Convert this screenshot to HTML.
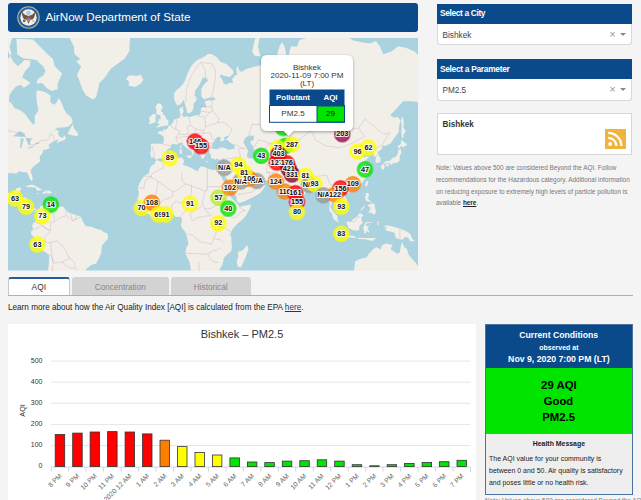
<!DOCTYPE html>
<html><head><meta charset="utf-8">
<style>
html,body{margin:0;padding:0;width:641px;height:500px;overflow:hidden;background:#f4f4f4;font-family:"Liberation Sans",sans-serif;position:relative}
.a{position:absolute}
.tx{position:absolute;white-space:nowrap}
.mt{font-family:"Liberation Sans",sans-serif;font-size:7.3px;font-weight:bold;text-anchor:middle;fill:#111;stroke:#fff;stroke-width:2.2px;paint-order:stroke;stroke-opacity:0.9;stroke-linejoin:round}
.yl{font-family:"Liberation Sans",sans-serif;font-size:7px;fill:#333;text-anchor:end}
.xl{font-family:"Liberation Sans",sans-serif;font-size:6.8px;fill:#666;text-anchor:end}
</style></head><body>
<div class="a" style="left:8px;top:3px;width:410px;height:29.3px;background:#0b4a8a;border-radius:3px"></div>
<svg class="a" style="left:16.5px;top:6px" width="23" height="23" viewBox="0 0 23 23">
  <circle cx="11.5" cy="11.5" r="11.3" fill="#b8b888"/><circle cx="11.5" cy="11.5" r="10.2" fill="#2a5fa8"/><circle cx="11.5" cy="11.5" r="8.2" fill="#f0f0ea"/>
  <circle cx="11.5" cy="7" r="2.3" fill="#a8c8dc"/>
  <path d="M5 5.5 Q4.5 13.5 10 14 L11.5 18 L13 14 Q18.5 13.5 18 5.5 Q15.5 9.5 12.5 9.5 L11.5 10.5 L10.5 9.5 Q7.5 9.5 5 5.5Z" fill="#7a5230"/>
  <path d="M9.6 11.8 H13.4 V14.5 Q11.5 16.5 9.6 14.5Z" fill="#d87070"/><rect x="9.6" y="11.8" width="3.8" height="1.2" fill="#5a7ab8"/>
  <circle cx="7.2" cy="14.8" r="1.4" fill="#4a7a3a"/><path d="M15 13.5 L17 16" stroke="#8a8a70" stroke-width="0.8"/>
</svg>
<svg class="a" style="left:8px;top:38px" width="410" height="232.5" viewBox="0 0 410 232.5">
 <rect width="410" height="232.5" fill="#aad3df"/>
 <path d="M-8.2 157.7L-1.6 159.8L1.8 159.1L5.1 161.9L8.4 163.1L11.7 164.1L13.4 164.6L15.0 167.0L15.5 169.7L17.2 170.2L19.0 172.0L21.7 172.5L25.0 174.0L25.8 171.4L28.3 172.4L29.3 174.6L29.5 171.7L27.5 170.5L25.0 170.7L22.5 171.5L20.0 169.5L18.9 167.8L19.2 165.3L19.4 161.2L17.5 159.6L15.0 159.5L11.7 159.6L11.2 154.9L12.6 151.4L13.4 149.6L11.7 149.6L7.9 150.5L7.6 153.2L5.9 154.9L1.8 155.5L-0.7 154.4L-2.4 152.3L-4.0 148.7L-4.5 145.1L-3.6 141.5L-3.9 138.7L-1.6 136.6L1.8 134.7L6.7 135.5L9.2 135.3L10.1 133.6L12.6 133.4L15.9 134.3L18.4 134.0L20.4 136.8L21.7 140.6L23.3 143.0L24.8 141.8L24.2 137.8L22.8 134.0L22.8 132.0L25.0 129.1L28.3 126.3L31.6 123.7L32.5 122.5L31.6 120.0L31.8 118.1L33.3 116.9L35.0 114.1L35.0 112.3L38.3 111.5L41.6 110.1L41.3 108.8L40.4 107.0L43.3 104.7L46.6 102.8L50.7 101.0L48.4 104.9L52.4 103.5L56.5 101.9L58.2 100.0L56.2 97.6L54.9 100.0L51.6 98.8L49.9 95.6L50.7 93.1L48.2 92.1L44.9 93.1L41.6 96.4L39.9 97.8L43.3 93.9L46.6 91.9L49.9 89.6L54.9 89.6L59.9 88.8L63.2 86.1L64.8 83.4L63.2 79.3L58.2 75.0L55.7 70.5L54.1 65.8L50.7 59.9L48.2 64.9L45.8 66.8L42.4 64.2L42.4 57.6L38.3 54.8L33.3 53.0L28.7 52.3L28.3 59.3L29.2 65.8L30.5 72.6L26.7 77.9L27.0 84.8L25.0 86.7L21.7 82.6L16.7 75.5L11.7 72.0L6.7 70.2L3.4 65.2L0.9 63.2L1.4 57.6L3.4 54.1L7.6 48.7L13.4 46.0L15.0 36.9L17.5 32.6L21.7 28.2L22.5 22.6L16.7 22.1L10.1 28.2L5.1 23.5L0.1 13.6L-8.2 16.2ZM8.4 0.8L25.0 1.4L31.6 8.2L38.3 15.1L44.9 21.1L46.6 28.2L54.1 35.6L51.6 40.9L49.4 46.8L49.9 50.9L44.1 53.0L39.1 50.5L34.1 44.9L28.3 45.6L30.0 40.9L35.8 36.9L37.5 32.6L35.0 28.2L28.3 22.1L21.7 21.1L15.0 20.2L9.2 16.2ZM12.6 46.8L15.0 39.7L22.5 44.9L15.9 49.8ZM-8.2 -45.5L5.1 -45.5L5.1 -3.5L1.8 8.2L3.4 16.2L0.1 21.1L-8.2 21.1ZM58.2 -45.5L61.5 -0.4L65.7 8.2L66.5 16.2L72.3 21.1L68.2 23.5L73.1 28.2L69.0 36.9L71.5 42.9L74.8 52.3L78.1 57.6L84.8 61.6L88.1 59.3L89.7 52.3L91.4 44.9L96.4 40.1L103.0 30.4L116.3 21.1L121.3 13.6L122.1 -0.4L124.6 -45.5ZM118.0 40.9L121.3 37.3L127.9 38.1L132.9 36.9L135.4 41.7L132.9 45.6L127.1 49.0L120.5 47.5L121.3 43.7ZM59.4 96.1L64.8 85.9L65.7 90.1L69.0 93.9L70.3 96.4L69.0 98.3L65.7 97.6ZM16.7 148.9L21.7 146.8L25.0 146.8L30.0 149.3L34.6 152.0L29.2 152.7L27.5 149.6L23.3 149.3L18.4 149.1ZM34.1 154.9L37.5 152.5L41.6 152.8L44.3 154.8L41.6 155.5L38.3 155.8L34.1 155.5ZM27.8 155.3L31.3 155.6L30.0 156.2ZM46.2 154.9L48.9 155.3L46.2 155.8ZM29.3 171.7L31.6 170.4L32.5 168.3L35.0 167.3L38.3 165.8L39.1 167.8L38.6 170.4L40.8 167.0L44.9 168.7L49.9 169.3L54.9 168.3L56.5 170.4L58.2 172.4L61.5 174.9L66.5 176.4L71.5 177.9L73.1 179.6L74.8 183.2L77.3 187.9L83.1 188.7L88.1 190.8L93.1 192.0L96.4 194.5L99.4 195.3L100.0 198.7L99.7 201.2L96.4 204.6L93.9 208.0L93.1 215.7L90.6 221.0L88.1 225.4L83.1 226.9L78.1 230.9L77.3 238.4L39.9 238.4L39.9 234.6L40.8 225.4L41.3 217.5L38.3 214.8L32.5 211.4L30.8 208.0L28.3 203.7L25.8 198.7L23.0 196.2L23.3 193.3L25.0 191.2L24.2 187.9L25.0 185.4L27.0 183.7L29.2 179.6L29.5 175.4L28.3 173.7L25.8 171.4ZM148.5 122.1L147.2 120.4L145.5 119.6L143.0 120.0L143.2 116.9L142.0 116.2L143.0 113.2L143.2 109.5L142.4 107.0L144.5 105.4L148.7 105.8L152.0 105.8L154.8 106.1L155.8 103.1L156.0 99.5L154.1 97.3L150.0 95.4L150.3 93.6L152.8 93.1L155.5 93.6L155.1 90.8L157.5 91.9L160.3 89.6L160.5 87.7L163.1 86.7L165.3 84.0L166.1 81.2L169.4 80.4L172.1 79.6L172.1 75.0L171.2 71.1L175.2 68.3L174.9 72.6L175.9 72.3L174.2 77.0L175.9 79.3L178.6 78.1L181.0 79.3L185.2 77.9L188.5 77.0L190.5 78.1L192.7 75.0L192.8 71.1L195.2 68.3L198.1 69.9L197.8 66.4L196.6 63.6L200.1 62.3L204.3 62.6L207.9 61.3L205.6 59.3L201.8 59.6L196.0 61.3L193.3 58.6L193.5 54.8L193.2 51.2L195.2 47.5L198.5 43.7L200.0 42.5L198.5 39.7L194.7 39.7L193.2 43.3L190.2 48.7L187.3 52.3L186.5 56.9L188.7 60.3L188.0 62.9L185.7 65.5L185.2 70.5L184.2 73.2L181.4 75.3L179.0 74.7L178.7 71.7L177.4 67.4L176.4 63.9L175.2 61.6L174.4 64.2L171.4 67.1L169.4 67.4L167.3 64.5L166.1 60.3L166.1 55.8L168.1 52.3L171.9 49.4L174.4 46.8L176.9 42.9L178.6 38.1L181.0 32.6L183.5 27.7L186.0 25.0L189.3 22.1L194.3 19.7L200.6 15.7L204.3 16.2L209.3 19.7L212.6 24.0L218.4 25.9L225.0 32.2L225.9 36.9L229.2 36.9L228.4 30.4L229.7 27.7L231.7 33.5L234.5 33.5L237.5 31.3L248.4 28.2L257.1 26.3L260.7 23.1L264.0 24.5L269.9 27.7L271.5 23.5L269.0 17.2L271.5 8.2L274.0 4.3L276.5 8.2L278.1 16.2L278.6 30.4L279.8 28.2L281.5 13.6L283.1 8.2L288.9 8.8L291.4 1.9L300.6 -0.4L300.6 -45.5L340.4 -45.5L340.4 -0.4L345.4 2.5L353.7 4.3L362.0 5.4L367.8 3.1L371.9 8.2L375.3 16.2L383.6 13.6L390.2 8.2L398.5 9.9L406.8 13.6L410.1 17.2L431.7 21.1L431.7 54.1L423.4 55.8L415.1 63.2L410.1 63.9L403.5 63.2L395.2 63.2L391.4 67.4L386.9 72.3L382.2 77.3L386.1 79.8L389.4 78.7L392.5 82.6L391.0 88.8L390.7 93.9L387.7 98.1L382.7 105.2L378.6 107.4L376.1 107.9L374.8 108.6L373.1 111.7L370.3 113.6L369.4 115.1L370.9 116.9L372.6 120.4L372.4 123.7L369.4 124.9L367.5 125.1L367.8 121.0L368.1 118.8L365.8 118.3L365.6 116.0L364.5 114.1L360.7 112.8L359.0 116.2L360.0 111.7L357.0 113.2L354.5 115.4L353.3 116.2L355.2 119.0L356.7 119.6L358.3 118.3L361.1 119.2L358.7 121.0L356.0 123.7L357.8 127.1L358.7 129.5L360.2 131.6L359.5 133.2L360.3 134.3L359.5 136.8L357.8 139.1L356.3 141.5L354.5 144.2L351.7 146.6L347.9 147.9L346.2 148.4L343.7 149.1L341.2 150.0L340.9 151.8L340.1 149.6L337.9 149.3L334.9 151.2L333.4 153.7L334.6 156.2L337.1 158.4L338.7 161.0L339.2 165.3L338.7 167.3L335.4 168.8L332.1 171.9L331.8 168.8L329.6 168.5L328.0 166.0L325.5 164.9L324.0 163.6L323.8 165.8L322.5 168.7L324.3 172.2L326.3 174.7L328.0 176.2L329.4 178.2L329.4 181.6L330.9 183.9L329.6 184.0L326.0 181.6L324.5 178.2L324.1 175.4L321.3 172.9L321.3 169.5L321.5 165.3L320.0 158.4L318.0 157.9L315.5 159.6L314.3 158.9L314.7 155.8L313.0 153.2L311.2 150.2L310.2 147.9L308.0 148.7L305.5 149.1L302.2 149.6L301.4 152.3L298.9 153.5L297.2 155.5L294.4 158.3L291.1 160.0L290.9 164.1L290.4 168.7L289.3 169.2L287.6 171.4L286.5 172.7L285.0 171.4L283.6 167.3L282.0 164.8L279.8 159.3L278.6 154.1L278.6 150.2L278.1 148.4L274.8 150.9L272.3 148.2L274.5 147.1L271.5 146.0L269.5 143.7L268.2 142.6L264.9 143.0L260.1 143.0L254.9 142.4L252.9 141.8L252.1 139.6L251.3 139.2L248.3 140.4L244.9 138.7L242.5 136.8L241.1 134.0L238.3 134.0L237.5 134.3L238.3 137.4L240.0 139.6L241.1 141.5L242.1 143.7L243.0 144.6L243.5 142.8L243.3 141.3L244.1 145.3L247.8 144.8L249.9 142.8L250.9 140.9L251.4 143.7L253.2 145.5L255.4 146.0L257.1 147.9L254.9 151.4L253.7 153.2L252.1 154.9L249.4 156.7L244.5 159.6L239.1 161.9L235.8 163.6L232.5 164.8L230.0 164.9L228.8 161.9L228.4 159.3L226.7 155.8L224.2 152.3L222.5 149.1L221.7 145.5L219.6 142.4L216.9 137.8L215.7 134.9L214.7 137.8L213.4 136.8L211.9 134.1L212.6 137.4L214.2 140.6L216.7 145.1L218.9 148.7L219.7 154.1L221.7 155.8L223.0 159.6L225.9 161.9L228.2 164.4L229.7 166.5L231.7 168.8L235.8 167.7L239.1 167.3L242.8 166.5L242.6 168.7L240.8 172.5L238.3 177.1L235.0 181.2L230.8 184.5L227.5 187.5L225.0 190.4L223.0 194.0L222.2 197.0L223.4 199.5L223.4 203.7L223.9 208.0L223.4 213.1L219.2 216.6L215.9 219.7L215.1 223.7L214.2 227.3L211.8 230.9L211.4 233.7L211.4 238.4L182.7 238.4L183.0 232.8L181.9 225.4L181.7 223.7L179.4 220.1L177.4 215.2L178.2 209.7L180.4 206.3L179.7 201.2L178.1 196.2L177.4 193.7L174.4 190.8L172.7 187.5L173.6 184.5L173.9 180.4L172.2 178.7L169.4 178.9L167.6 179.1L165.3 175.7L161.1 175.7L156.1 177.9L152.8 177.9L145.4 178.9L142.4 177.4L138.9 174.7L135.9 172.0L133.2 168.7L130.4 165.8L129.2 161.5L130.4 158.4L130.9 153.7L129.6 150.5L131.2 145.7L133.7 141.5L136.2 138.1L141.2 134.9L141.5 131.1L143.7 127.5L146.5 126.1L147.8 122.7ZM148.3 89.8L152.8 88.5L160.0 87.2L160.6 82.9L158.3 81.0L157.5 78.7L155.3 76.4L154.5 74.1L152.8 73.5L154.8 68.9L152.3 65.5L149.5 65.5L147.5 68.9L148.5 72.6L148.2 75.5L149.8 77.0L152.2 76.7L152.5 79.3L152.8 81.2L150.2 81.2L150.8 82.6L149.2 85.3L152.5 86.4L150.3 86.9ZM147.8 84.3L147.3 79.6L148.5 77.3L145.7 75.5L143.7 77.6L141.2 79.3L141.2 81.0L142.0 83.2L140.5 85.1L141.5 86.1L144.5 85.3L147.2 84.3ZM290.3 169.9L290.9 169.9L292.8 172.0L293.8 174.6L292.6 175.9L290.8 176.2L290.3 173.7ZM338.1 153.7L340.4 152.1L342.1 152.8L341.2 154.9L339.6 155.5L338.2 154.9ZM358.7 143.1L360.2 143.3L359.5 147.0L358.3 148.9L357.2 147.0L357.8 144.2ZM375.1 126.1L377.8 123.3L382.2 122.7L384.9 119.6L387.7 119.0L390.2 114.7L390.2 111.9L392.7 110.8L393.5 114.7L391.9 117.5L391.7 120.2L391.5 123.1L389.9 124.1L388.2 124.9L385.2 124.9L384.7 125.5L382.7 126.9L381.9 124.9L378.6 125.3L375.3 126.3ZM390.2 110.4L390.0 107.9L392.7 106.3L393.4 101.4L396.0 104.0L399.2 106.3L395.7 109.2L393.0 107.9L391.7 109.9ZM373.3 127.1L375.3 126.3L376.9 128.1L375.6 131.4L373.9 131.6L373.1 128.7ZM377.8 126.3L381.4 125.7L380.6 127.7L378.6 128.5ZM393.9 100.0L393.4 95.1L393.7 87.5L393.0 82.1L394.7 78.1L395.7 83.4L395.5 90.1L397.7 92.9L395.2 97.6L395.8 99.3ZM357.8 154.9L360.7 154.9L360.8 158.4L359.5 160.2L363.6 164.4L363.6 165.3L361.1 163.6L358.3 163.1L357.8 161.4L356.7 158.9L357.7 157.9ZM360.2 166.5L366.1 165.3L366.6 167.8L367.3 170.7L368.0 174.0L366.0 176.9L363.6 174.7L360.3 174.7L362.0 172.0L362.8 169.5L360.3 168.7ZM352.4 172.2L356.2 167.5L356.7 168.7L352.9 172.9ZM338.7 183.7L339.7 182.9L342.1 183.7L345.4 180.9L349.5 177.9L351.2 175.4L352.9 175.4L355.7 177.6L353.7 179.1L353.3 182.9L355.3 184.5L352.9 186.2L351.2 188.7L351.2 192.0L347.9 192.8L342.9 191.2L340.4 190.0L339.4 187.0L338.7 185.4ZM332.4 197.5L333.8 196.3L337.6 196.8L341.2 197.5L344.7 197.7L347.9 198.9L347.7 200.0L343.7 199.7L337.9 198.9L334.6 198.2ZM349.0 199.7L355.3 199.9L362.0 199.9L369.0 200.2L365.3 202.0L364.3 203.1L357.0 201.2L350.4 201.0ZM356.2 195.3L356.0 192.0L355.0 190.8L356.7 186.2L357.8 184.2L364.5 183.7L365.3 184.0L358.7 185.4L357.3 187.5L359.5 187.9L362.0 187.7L359.5 189.5L360.7 192.8L361.6 195.3L358.7 192.8L357.7 195.5ZM369.4 182.9L371.1 183.7L370.3 185.4L371.1 187.5L369.4 187.0ZM375.3 187.9L380.2 187.5L385.2 188.7L391.9 190.5L399.3 193.7L402.6 196.2L403.5 199.5L406.8 203.4L401.8 202.9L400.2 199.5L396.8 198.9L394.4 201.5L391.9 201.5L387.7 200.0L386.5 194.8L381.9 193.5L378.6 192.8L376.9 190.8L379.4 189.9ZM346.2 230.9L347.0 223.7L350.4 221.5L358.7 219.2L360.8 215.7L362.8 214.0L365.3 211.0L368.6 209.3L372.8 211.4L373.9 207.6L377.8 205.4L381.9 206.6L384.9 206.6L383.6 208.5L382.7 211.4L386.1 213.5L389.4 215.7L391.9 214.5L392.7 208.8L394.2 204.1L396.0 208.8L397.7 210.2L399.2 211.4L400.2 215.7L401.8 218.3L405.1 221.9L407.6 224.5L409.8 228.2L411.8 230.0L412.6 238.4L345.4 238.4ZM239.0 207.3L240.5 210.5L238.1 218.2L234.8 225.4L232.5 229.8L229.7 228.4L228.7 223.7L230.2 218.2L229.7 214.1L234.3 212.4ZM244.1 13.6L246.6 2.5L249.1 -3.5L257.4 -13.3L251.6 -0.4L249.9 8.2L252.4 18.2L246.6 17.7Z" fill="#f2efe9"/>
 <path d="M148.5 122.1L150.3 120.6L154.3 120.6L157.0 118.8L158.1 116.2L157.3 114.7L159.3 111.5L163.1 109.5L162.9 107.0L165.3 105.8L168.6 106.8L171.1 104.9L174.1 104.5L175.2 107.0L177.7 109.2L181.0 111.5L183.7 113.6L184.4 116.9L183.7 117.9L185.2 116.9L186.0 114.9L185.4 113.2L186.4 112.6L188.5 113.2L186.0 111.0L184.4 109.7L181.9 108.8L180.4 105.6L178.2 103.5L178.2 101.4L180.5 100.7L181.9 101.9L183.5 104.7L186.0 106.5L188.5 108.3L190.2 110.4L190.0 113.0L191.3 114.9L192.7 117.5L193.7 120.4L195.3 121.0L196.3 119.0L197.6 117.5L195.6 114.9L195.6 112.6L197.6 111.9L201.0 111.9L201.8 113.0L201.3 114.7L202.6 116.9L203.1 120.0L204.6 120.6L207.6 121.7L208.8 120.4L211.8 121.9L215.1 120.4L217.6 121.0L217.2 123.1L216.7 125.1L215.9 128.1L215.1 131.1L211.8 131.8L209.3 131.1L206.8 132.2L202.6 131.4L199.3 130.5L196.8 129.1L193.5 128.3L191.0 130.1L190.2 133.0L187.7 132.4L183.5 130.1L179.4 128.3L176.9 127.7L174.9 126.1L176.1 123.7L175.2 121.0L173.6 119.4L171.1 120.0L166.1 120.4L162.8 120.4L159.5 121.0L155.3 123.7L152.8 123.5L149.0 122.3ZM204.3 110.4L206.1 111.0L209.3 111.2L213.4 109.2L216.7 109.9L220.9 111.7L226.7 110.4L226.9 107.9L224.2 106.1L221.2 103.8L219.2 101.7L216.7 102.1L213.4 103.5L211.8 101.4L213.4 100.0L210.1 98.6L207.9 100.5L206.9 101.9L205.3 104.2L203.9 107.4ZM215.9 101.7L218.4 101.4L221.7 97.3L216.4 99.0ZM235.8 102.8L235.5 104.7L236.7 107.0L238.5 109.7L240.0 113.0L239.1 116.9L239.1 119.0L242.5 120.6L247.1 120.2L247.3 116.9L245.9 114.7L246.6 112.6L245.4 109.9L244.9 107.4L243.0 106.3L242.1 103.8L245.8 101.7L245.8 98.1L242.8 97.3L239.6 98.8L237.5 100.0ZM215.1 44.9L218.4 46.8L220.9 44.9L225.0 44.9L224.2 40.9L227.5 36.9L225.9 35.2L221.7 38.9L215.9 37.7L212.6 36.4L211.8 38.1L215.1 42.9ZM5.1 98.3L9.2 95.1L11.7 93.1L16.7 95.4L17.4 98.8L13.4 98.8L7.6 98.6ZM12.1 109.9L13.4 110.1L14.5 105.8L15.9 100.7L12.6 100.2L12.4 105.8ZM17.5 100.5L20.9 107.0L22.2 106.3L22.5 102.4L24.7 100.5L19.2 100.0ZM19.5 109.9L26.7 107.4L26.2 108.6L21.7 110.4ZM25.3 106.3L31.1 104.2L31.3 105.8L26.7 106.5ZM210.9 187.0L214.2 187.0L214.2 190.4L212.2 190.8L210.4 189.0Z" fill="#aad3df"/>
 <path d="M178.4 117.7L183.7 117.3L182.9 120.6L178.6 118.8ZM171.4 111.5L174.1 111.5L173.7 115.8L171.9 116.0ZM172.1 107.2L173.6 107.2L173.2 110.6L172.2 109.9ZM196.8 122.9L201.5 123.5L198.5 124.3ZM211.4 124.1L215.2 122.7L213.4 124.9Z" fill="#f2efe9"/>
 <path d="M155.0 124.1L155.3 130.1L152.0 131.1L143.4 136.4L143.4 139.1L149.8 143.3L159.8 150.5L164.9 153.7L167.4 153.2L177.7 146.0L181.0 147.0M136.2 138.3L143.4 138.3M129.6 150.0L136.2 150.0L136.2 147.0L137.9 141.5L143.4 139.1M149.8 143.3L147.8 158.4L138.7 160.2L137.5 161.4L138.7 165.3L143.7 168.7M173.6 134.0L174.4 143.3L177.7 146.0M199.3 130.9L199.3 148.7L219.2 148.7M181.0 147.0L197.6 153.2L197.6 152.3L199.3 152.3L199.3 148.7M197.6 153.2L194.3 164.4L196.8 171.2L203.1 177.6L199.3 177.9L189.3 179.6L184.4 182.9L181.9 175.9L184.4 173.7L189.3 171.2L194.3 167.8M183.5 147.0L183.5 154.1L181.0 163.6L179.4 163.6L172.7 164.8L167.8 163.6L163.6 167.0L163.6 171.2L162.3 175.7M164.9 153.7L164.4 158.4L158.6 161.0L157.0 161.0L154.5 162.7L148.7 168.7L143.7 168.7M172.1 178.6L177.7 172.9L180.2 168.7L181.9 165.3L181.0 163.6M196.8 171.2L202.6 170.4L210.9 166.1L214.2 170.4L217.6 162.0L221.7 155.8M214.2 170.4L215.9 177.9L226.7 179.6L229.2 178.2L234.2 172.9L237.5 172.9L230.8 168.7M215.9 177.9L214.2 187.9L222.9 194.0M206.8 187.9L208.4 193.7L205.9 200.4L212.6 202.0L215.9 205.4M178.6 196.2L184.4 197.0L186.9 199.5L194.3 204.6L197.6 204.6L203.5 206.3L205.9 200.4M177.4 215.2L191.0 215.7L199.8 216.2L204.3 212.8L208.4 212.2L212.6 209.7M191.0 223.7L191.0 230.9L191.0 236.5M199.8 216.2L202.6 221.9L206.8 224.0L210.9 224.5M129.9 163.6L135.4 165.3L138.7 165.3M153.2 167.8L153.2 177.9M159.5 167.8L160.3 175.9M144.5 172.9L143.7 168.7M217.6 121.0L227.5 119.6L232.2 119.4L231.7 114.3L230.0 111.0M227.5 119.6L226.2 125.1L222.5 129.7L219.2 131.1L216.7 134.9M222.5 129.7L235.8 135.9L237.5 134.3M232.2 119.4L234.2 124.1L236.7 128.1L237.5 134.0M229.2 156.7L244.1 154.1L249.9 147.9L250.8 144.2M247.3 119.4L252.4 117.9L258.2 120.8L259.4 123.1L258.7 134.3L261.6 135.1L260.1 143.0M258.7 134.3L267.4 134.9L273.2 131.1L275.7 126.1L280.6 120.0L276.5 120.0M271.5 145.5L275.7 144.2L280.6 134.0L281.8 129.1L286.5 123.1M286.5 123.1L288.9 129.1L292.3 133.6L303.9 138.7L310.5 138.1L318.8 137.2M303.9 138.7L304.7 141.5L310.5 143.3L311.4 148.7M318.8 137.2L321.3 145.1L325.5 149.6L330.4 147.5L337.1 149.5M325.5 149.6L324.6 153.2L320.5 159.3L322.1 168.7M323.8 155.8L332.1 161.9L333.8 167.0L331.3 168.7M330.4 147.5L335.4 157.6L336.2 161.0L333.8 167.0M236.7 101.2L240.8 97.6L244.1 86.1L259.1 87.5L259.9 79.3L274.0 75.8L284.0 79.3L290.6 87.5L302.7 92.4M302.7 92.4L310.5 88.0L320.5 84.8L330.4 89.3L337.1 91.4L350.4 90.1L357.0 81.2L368.6 90.1L375.3 96.4L381.9 94.4L375.3 104.7L374.8 108.6M302.7 92.4L308.0 102.4L317.2 107.7L332.1 109.7L342.9 105.8L356.7 98.3L350.4 90.1M302.7 92.4L290.6 102.4L290.9 108.8L280.6 107.0L267.4 107.0L250.8 101.7L245.8 109.2M247.3 119.4L250.8 111.5L257.4 110.4L260.7 105.8L267.4 107.0M269.0 119.4L274.0 113.6L279.0 114.7L290.9 108.8M275.7 126.1L282.3 120.0L286.5 123.1M375.3 107.7L374.8 108.6L373.3 107.2L367.0 111.0L364.1 113.9M367.8 118.3L370.9 116.9M230.0 111.0L235.8 110.4L237.1 111.0M224.2 105.8L230.8 108.1L237.1 111.0M154.8 106.1L163.1 108.3M146.2 109.2L144.2 109.2L146.2 115.8L145.4 119.6M162.0 87.5L167.8 91.4L171.4 92.6L170.2 96.1L167.8 99.5L169.4 104.7M167.8 81.0L169.1 84.8L167.8 88.0L167.8 91.4M172.1 76.7L174.4 76.7M181.4 79.3L182.4 87.5L178.6 89.3L180.7 93.1L179.4 96.4L173.6 96.4L170.2 96.1M167.8 99.5L171.1 100.0L175.2 98.1L180.5 98.8L180.5 100.7M182.4 87.5L189.0 91.4L195.2 92.6L197.6 88.8L196.8 79.3L190.5 78.1M185.9 93.6L189.0 91.4M179.4 96.4L186.0 95.1L195.8 95.1M195.2 92.6L195.8 95.1L202.0 94.6L204.6 101.2L206.9 101.7M195.8 95.1L191.5 99.8L195.5 104.7L195.0 108.6L195.8 110.8L201.5 109.9L204.3 109.2M195.5 104.7L205.3 105.2M190.0 113.0L192.0 111.2L191.8 108.1L189.7 105.8M180.5 100.7L183.9 99.5L185.2 98.8L189.3 100.2L191.5 99.8M196.8 79.3L202.0 74.4L204.6 72.9L203.9 69.6L204.3 62.6M192.7 73.2L202.0 74.4M192.8 68.6L203.9 68.6M197.6 88.8L210.1 84.5L215.9 84.0L224.2 91.1L221.2 97.1M204.6 72.9L210.9 80.4L210.1 84.5M204.3 25.9L207.6 32.6L206.8 44.9L203.5 59.3M177.7 64.2L178.6 50.5L182.7 38.9L189.3 28.2L192.7 24.5L204.3 25.9M197.6 39.7L196.8 30.4L192.7 24.5M204.3 110.4L201.5 109.9M0.1 92.6L10.1 94.9L17.4 98.8L20.9 101.7L20.9 107.0L26.7 106.3L33.8 102.4L39.1 102.4L42.8 96.6L45.3 97.3L46.6 102.4M-3.6 141.7L-7.4 138.7L-10.7 134.3M5.1 161.9L4.7 156.2L10.1 156.2L11.4 154.9M10.1 156.2L9.7 159.5M9.6 162.7L12.6 163.9M9.7 159.5L15.0 164.4L19.7 161.0M15.5 167.8L18.9 167.8M20.7 170.2L20.2 172.7M29.5 171.7L28.5 174.2M38.3 166.5L37.5 174.6L45.8 176.2L46.6 183.7L42.4 184.5L42.4 193.3L36.6 198.7L37.5 204.6L42.4 204.6L49.1 202.9L55.7 208.8L58.2 213.6L61.5 220.1L66.5 224.5L67.2 230.0L68.7 232.6M46.6 183.7L51.6 179.6L58.2 177.9L64.8 182.9L72.1 179.2M58.2 172.2L58.2 177.9M62.8 176.2L64.8 182.9M68.2 176.7L67.7 182.4M24.5 192.0L28.3 190.4L33.3 187.9L41.6 192.8M26.7 184.2L33.3 186.4L41.6 192.8M42.4 204.6L43.6 214.8L45.3 225.1L54.1 224.0L61.5 220.1M40.9 216.4L43.3 217.5L45.3 225.1M54.1 224.0L58.2 227.3L62.2 230.2L67.2 230.0M44.9 227.3L44.1 234.6M38.3 152.8L38.6 155.8M391.9 190.5L391.9 201.5M339.7 182.9L347.0 183.7L349.5 178.7L352.9 179.1" fill="none" stroke="#b98fb4" stroke-width="0.7" stroke-opacity="0.42" stroke-linejoin="round"/>
 <circle cx="7.0" cy="160.4" r="7.6" fill="#ffff00" fill-opacity="0.76" stroke="#ffff00" stroke-opacity="0.5" stroke-width="1.9"/><circle cx="18.0" cy="168.6" r="7.6" fill="#ffff00" fill-opacity="0.76" stroke="#ffff00" stroke-opacity="0.5" stroke-width="1.9"/><circle cx="42.8" cy="166.6" r="7.6" fill="#00e400" fill-opacity="0.76" stroke="#00e400" stroke-opacity="0.5" stroke-width="1.9"/><circle cx="34.4" cy="178.3" r="7.6" fill="#ffff00" fill-opacity="0.76" stroke="#ffff00" stroke-opacity="0.5" stroke-width="1.9"/><circle cx="29.4" cy="206.4" r="7.6" fill="#ffff00" fill-opacity="0.76" stroke="#ffff00" stroke-opacity="0.5" stroke-width="1.9"/><circle cx="187.0" cy="103.6" r="7.6" fill="#ff0000" fill-opacity="0.76" stroke="#ff0000" stroke-opacity="0.5" stroke-width="1.9"/><circle cx="193.0" cy="108.2" r="7.6" fill="#ff0000" fill-opacity="0.76" stroke="#ff0000" stroke-opacity="0.5" stroke-width="1.9"/><circle cx="161.9" cy="120.3" r="7.6" fill="#ffff00" fill-opacity="0.76" stroke="#ffff00" stroke-opacity="0.5" stroke-width="1.9"/><circle cx="133.6" cy="170.0" r="7.6" fill="#ffff00" fill-opacity="0.76" stroke="#ffff00" stroke-opacity="0.5" stroke-width="1.9"/><circle cx="143.9" cy="164.7" r="7.6" fill="#ff7e00" fill-opacity="0.76" stroke="#ff7e00" stroke-opacity="0.5" stroke-width="1.9"/><circle cx="150.4" cy="176.4" r="7.6" fill="#ffff00" fill-opacity="0.76" stroke="#ffff00" stroke-opacity="0.5" stroke-width="1.9"/><circle cx="157.6" cy="176.4" r="7.6" fill="#ffff00" fill-opacity="0.76" stroke="#ffff00" stroke-opacity="0.5" stroke-width="1.9"/><circle cx="182.0" cy="165.9" r="7.6" fill="#ffff00" fill-opacity="0.76" stroke="#ffff00" stroke-opacity="0.5" stroke-width="1.9"/><circle cx="210.3" cy="185.3" r="7.6" fill="#ffff00" fill-opacity="0.76" stroke="#ffff00" stroke-opacity="0.5" stroke-width="1.9"/><circle cx="210.5" cy="159.7" r="7.6" fill="#b8ee20" fill-opacity="0.76" stroke="#b8ee20" stroke-opacity="0.5" stroke-width="1.9"/><circle cx="220.3" cy="170.5" r="7.6" fill="#00e400" fill-opacity="0.76" stroke="#00e400" stroke-opacity="0.5" stroke-width="1.9"/><circle cx="216.4" cy="129.9" r="7.6" fill="#999999" fill-opacity="0.76" stroke="#999999" stroke-opacity="0.5" stroke-width="1.9"/><circle cx="230.4" cy="127.2" r="7.6" fill="#ffff00" fill-opacity="0.76" stroke="#ffff00" stroke-opacity="0.5" stroke-width="1.9"/><circle cx="232.6" cy="143.4" r="7.6" fill="#999999" fill-opacity="0.76" stroke="#999999" stroke-opacity="0.5" stroke-width="1.9"/><circle cx="248.8" cy="143.0" r="7.6" fill="#999999" fill-opacity="0.76" stroke="#999999" stroke-opacity="0.5" stroke-width="1.9"/><circle cx="241.2" cy="140.7" r="7.6" fill="#ff7e00" fill-opacity="0.76" stroke="#ff7e00" stroke-opacity="0.5" stroke-width="1.9"/><circle cx="236.2" cy="134.6" r="7.6" fill="#ffff00" fill-opacity="0.76" stroke="#ffff00" stroke-opacity="0.5" stroke-width="1.9"/><circle cx="221.9" cy="149.7" r="7.6" fill="#ff7e00" fill-opacity="0.76" stroke="#ff7e00" stroke-opacity="0.5" stroke-width="1.9"/><circle cx="253.2" cy="117.8" r="7.6" fill="#00e400" fill-opacity="0.76" stroke="#00e400" stroke-opacity="0.5" stroke-width="1.9"/><circle cx="275.0" cy="90.0" r="7.6" fill="#00e400" fill-opacity="0.76" stroke="#00e400" stroke-opacity="0.5" stroke-width="1.9"/><circle cx="277.0" cy="108.0" r="7.6" fill="#00e400" fill-opacity="0.76" stroke="#00e400" stroke-opacity="0.5" stroke-width="1.9"/><circle cx="284.0" cy="106.5" r="7.6" fill="#ffff00" fill-opacity="0.76" stroke="#ffff00" stroke-opacity="0.5" stroke-width="1.9"/><circle cx="269.8" cy="110.0" r="7.6" fill="#ffff00" fill-opacity="0.76" stroke="#ffff00" stroke-opacity="0.5" stroke-width="1.9"/><circle cx="270.5" cy="116.3" r="7.6" fill="#7e0023" fill-opacity="0.76" stroke="#7e0023" stroke-opacity="0.5" stroke-width="1.9"/><circle cx="268.7" cy="124.4" r="7.6" fill="#ff0000" fill-opacity="0.76" stroke="#ff0000" stroke-opacity="0.5" stroke-width="1.9"/><circle cx="278.8" cy="125.3" r="7.6" fill="#ff0000" fill-opacity="0.76" stroke="#ff0000" stroke-opacity="0.5" stroke-width="1.9"/><circle cx="280.8" cy="131.0" r="7.6" fill="#7e0023" fill-opacity="0.76" stroke="#7e0023" stroke-opacity="0.5" stroke-width="1.9"/><circle cx="284.0" cy="136.5" r="7.6" fill="#7e0023" fill-opacity="0.76" stroke="#7e0023" stroke-opacity="0.5" stroke-width="1.9"/><circle cx="267.8" cy="143.5" r="7.6" fill="#ff7e00" fill-opacity="0.76" stroke="#ff7e00" stroke-opacity="0.5" stroke-width="1.9"/><circle cx="276.8" cy="153.5" r="7.6" fill="#ff7e00" fill-opacity="0.76" stroke="#ff7e00" stroke-opacity="0.5" stroke-width="1.9"/><circle cx="287.4" cy="155.2" r="7.6" fill="#ff0000" fill-opacity="0.76" stroke="#ff0000" stroke-opacity="0.5" stroke-width="1.9"/><circle cx="289.0" cy="164.0" r="7.6" fill="#ff0000" fill-opacity="0.76" stroke="#ff0000" stroke-opacity="0.5" stroke-width="1.9"/><circle cx="289.0" cy="174.0" r="7.6" fill="#ffff00" fill-opacity="0.76" stroke="#ffff00" stroke-opacity="0.5" stroke-width="1.9"/><circle cx="297.5" cy="137.9" r="7.6" fill="#ffff00" fill-opacity="0.76" stroke="#ffff00" stroke-opacity="0.5" stroke-width="1.9"/><circle cx="301.1" cy="146.9" r="7.6" fill="#999999" fill-opacity="0.76" stroke="#999999" stroke-opacity="0.5" stroke-width="1.9"/><circle cx="306.5" cy="146.0" r="7.6" fill="#ffff00" fill-opacity="0.76" stroke="#ffff00" stroke-opacity="0.5" stroke-width="1.9"/><circle cx="334.3" cy="96.2" r="7.6" fill="#99004c" fill-opacity="0.76" stroke="#99004c" stroke-opacity="0.5" stroke-width="1.9"/><circle cx="344.8" cy="146.2" r="7.6" fill="#ff7e00" fill-opacity="0.76" stroke="#ff7e00" stroke-opacity="0.5" stroke-width="1.9"/><circle cx="332.5" cy="150.4" r="7.6" fill="#ff0000" fill-opacity="0.76" stroke="#ff0000" stroke-opacity="0.5" stroke-width="1.9"/><circle cx="315.5" cy="157.3" r="7.6" fill="#999999" fill-opacity="0.76" stroke="#999999" stroke-opacity="0.5" stroke-width="1.9"/><circle cx="327.0" cy="156.5" r="7.6" fill="#ff7e00" fill-opacity="0.76" stroke="#ff7e00" stroke-opacity="0.5" stroke-width="1.9"/><circle cx="333.3" cy="168.6" r="7.6" fill="#ffff00" fill-opacity="0.76" stroke="#ffff00" stroke-opacity="0.5" stroke-width="1.9"/><circle cx="349.5" cy="113.5" r="7.6" fill="#ffff00" fill-opacity="0.76" stroke="#ffff00" stroke-opacity="0.5" stroke-width="1.9"/><circle cx="360.5" cy="109.6" r="7.6" fill="#ffff00" fill-opacity="0.76" stroke="#ffff00" stroke-opacity="0.5" stroke-width="1.9"/><circle cx="357.0" cy="131.4" r="7.6" fill="#00e400" fill-opacity="0.76" stroke="#00e400" stroke-opacity="0.5" stroke-width="1.9"/><circle cx="333.3" cy="195.8" r="7.6" fill="#ffff00" fill-opacity="0.76" stroke="#ffff00" stroke-opacity="0.5" stroke-width="1.9"/><text x="7.0" y="162.5" class="mt">63</text><text x="18.0" y="170.7" class="mt">79</text><text x="42.8" y="168.7" class="mt">14</text><text x="34.4" y="180.4" class="mt">73</text><text x="29.4" y="208.5" class="mt">63</text><text x="187.0" y="105.7" class="mt">146</text><text x="193.0" y="110.3" class="mt">155</text><text x="161.9" y="122.4" class="mt">89</text><text x="133.6" y="172.1" class="mt">70</text><text x="143.9" y="166.8" class="mt">108</text><text x="150.4" y="178.5" class="mt">69</text><text x="157.6" y="178.5" class="mt">91</text><text x="182.0" y="168.0" class="mt">91</text><text x="210.3" y="187.4" class="mt">92</text><text x="210.5" y="161.8" class="mt">57</text><text x="220.3" y="172.6" class="mt">40</text><text x="216.4" y="132.0" class="mt">N/A</text><text x="230.4" y="129.3" class="mt">94</text><text x="232.6" y="145.5" class="mt">N/A</text><text x="248.8" y="145.1" class="mt">N/A</text><text x="241.2" y="142.8" class="mt">106</text><text x="236.2" y="136.7" class="mt">81</text><text x="221.9" y="151.8" class="mt">102</text><text x="253.2" y="119.9" class="mt">43</text><text x="284.0" y="108.6" class="mt">287</text><text x="269.8" y="112.1" class="mt">73</text><text x="270.5" y="118.4" class="mt">403</text><text x="268.7" y="126.5" class="mt">127</text><text x="278.8" y="127.4" class="mt">176</text><text x="280.8" y="133.1" class="mt">421</text><text x="284.0" y="138.6" class="mt">331</text><text x="267.8" y="145.6" class="mt">124</text><text x="276.8" y="155.6" class="mt">116</text><text x="287.4" y="157.3" class="mt">161</text><text x="289.0" y="166.1" class="mt">155</text><text x="289.0" y="176.1" class="mt">80</text><text x="297.5" y="140.0" class="mt">81</text><text x="301.1" y="149.0" class="mt">N/A</text><text x="306.5" y="148.1" class="mt">93</text><text x="334.3" y="98.3" class="mt">203</text><text x="344.8" y="148.3" class="mt">109</text><text x="332.5" y="152.5" class="mt">156</text><text x="315.5" y="159.4" class="mt">N/A</text><text x="327.0" y="158.6" class="mt">122</text><text x="333.3" y="170.7" class="mt">93</text><text x="349.5" y="115.6" class="mt">96</text><text x="360.5" y="111.7" class="mt">62</text><text x="357.0" y="133.5" class="mt">47</text><text x="333.3" y="197.9" class="mt">83</text>
</svg>
<svg class="a" style="left:255px;top:50px;overflow:visible" width="110" height="95">
 <defs><filter id="sh" x="-20%" y="-20%" width="140%" height="140%"><feGaussianBlur stdDeviation="1.6"/></filter></defs>
 <path d="M12 5 H92 Q98 5 98 11 V75 Q98 81 92 81 H38.5 L33.5 86 L28.5 81 H12 Q6 81 6 75 V11 Q6 5 12 5Z" fill="#000" opacity="0.35" filter="url(#sh)" transform="translate(0,1)"/>
 <path d="M12 5 H92 Q98 5 98 11 V75 Q98 81 92 81 H38.5 L33.5 86 L28.5 81 H12 Q6 81 6 75 V11 Q6 5 12 5Z" fill="#fff"/>
 <rect x="14.5" y="39.5" width="75" height="16.5" fill="#0b4a8a"/>
 <rect x="14.5" y="55.5" width="75" height="16.8" fill="#fff" stroke="#0b4a8a" stroke-width="1"/>
 <rect x="62" y="56" width="27.5" height="16" fill="#00e400" stroke="#0b4a8a" stroke-width="1"/>
</svg>
<div class="a" style="left:8px;top:277px;width:61.5px;height:18.5px;background:#fff;border:1px solid #c8c8c8;border-top:2px solid #2a5a9a;border-bottom:none;border-radius:3px 3px 0 0;box-sizing:border-box"></div>
<div class="a" style="left:71.5px;top:277px;width:97px;height:18px;background:#d3d3d3;border-radius:3px 3px 0 0"></div>
<div class="a" style="left:171px;top:277px;width:79.5px;height:18px;background:#d3d3d3;border-radius:3px 3px 0 0"></div>
<div class="a" style="left:8px;top:295px;width:624.5px;height:1px;background:#b0b0b0"></div>
<div class="a" style="left:8px;top:324px;width:468.3px;height:176px;background:#fff"></div>
<svg class="a" style="left:0;top:0" width="641" height="500">
 <text transform="translate(24.8,410.4) rotate(-90)" style="font-family:'Liberation Sans',sans-serif;font-size:7.3px;fill:#333;text-anchor:middle">AQI</text>
 <text x="42.5" y="468.0" class="yl">0</text><line x1="51" x2="470.5" y1="445.5" y2="445.5" stroke="#e6e6e6" stroke-width="1"/><text x="42.5" y="446.9" class="yl">100</text><line x1="51" x2="470.5" y1="424.4" y2="424.4" stroke="#e6e6e6" stroke-width="1"/><text x="42.5" y="425.8" class="yl">200</text><line x1="51" x2="470.5" y1="403.3" y2="403.3" stroke="#e6e6e6" stroke-width="1"/><text x="42.5" y="404.7" class="yl">300</text><line x1="51" x2="470.5" y1="382.2" y2="382.2" stroke="#e6e6e6" stroke-width="1"/><text x="42.5" y="383.6" class="yl">400</text><line x1="51" x2="470.5" y1="361.1" y2="361.1" stroke="#e6e6e6" stroke-width="1"/><text x="42.5" y="362.5" class="yl">500</text><line x1="51" x2="470.5" y1="467.1" y2="467.1" stroke="#ccd6eb" stroke-width="1"/><rect x="55.2" y="434.5" width="9.5" height="32.1" fill="#ff0000" stroke="#333" stroke-width="0.8"/><line x1="51.2" x2="51.2" y1="467.1" y2="471.6" stroke="#ccd6eb" stroke-width="1"/><text transform="translate(62.2,476.4) rotate(-45)" class="xl">8 PM</text><rect x="72.7" y="433.1" width="9.5" height="33.5" fill="#ff0000" stroke="#333" stroke-width="0.8"/><line x1="68.7" x2="68.7" y1="467.1" y2="471.6" stroke="#ccd6eb" stroke-width="1"/><text transform="translate(79.7,476.4) rotate(-45)" class="xl">9 PM</text><rect x="90.1" y="432.0" width="9.5" height="34.6" fill="#ff0000" stroke="#333" stroke-width="0.8"/><line x1="86.1" x2="86.1" y1="467.1" y2="471.6" stroke="#ccd6eb" stroke-width="1"/><text transform="translate(97.2,476.4) rotate(-45)" class="xl">10 PM</text><rect x="107.6" y="431.6" width="9.5" height="35.0" fill="#ff0000" stroke="#333" stroke-width="0.8"/><line x1="103.6" x2="103.6" y1="467.1" y2="471.6" stroke="#ccd6eb" stroke-width="1"/><text transform="translate(114.6,476.4) rotate(-45)" class="xl">11 PM</text><rect x="125.1" y="432.0" width="9.5" height="34.6" fill="#ff0000" stroke="#333" stroke-width="0.8"/><line x1="121.1" x2="121.1" y1="467.1" y2="471.6" stroke="#ccd6eb" stroke-width="1"/><text transform="translate(132.1,476.4) rotate(-45)" class="xl">2020 12 AM</text><rect x="142.5" y="433.9" width="9.5" height="32.7" fill="#ff0000" stroke="#333" stroke-width="0.8"/><line x1="138.6" x2="138.6" y1="467.1" y2="471.6" stroke="#ccd6eb" stroke-width="1"/><text transform="translate(149.6,476.4) rotate(-45)" class="xl">1 AM</text><rect x="160.0" y="440.2" width="9.5" height="26.4" fill="#ff7e00" stroke="#333" stroke-width="0.8"/><line x1="156.0" x2="156.0" y1="467.1" y2="471.6" stroke="#ccd6eb" stroke-width="1"/><text transform="translate(167.1,476.4) rotate(-45)" class="xl">2 AM</text><rect x="177.5" y="446.6" width="9.5" height="20.0" fill="#ffff00" stroke="#333" stroke-width="0.8"/><line x1="173.5" x2="173.5" y1="467.1" y2="471.6" stroke="#ccd6eb" stroke-width="1"/><text transform="translate(184.5,476.4) rotate(-45)" class="xl">3 AM</text><rect x="195.0" y="452.5" width="9.5" height="14.1" fill="#ffff00" stroke="#333" stroke-width="0.8"/><line x1="191.0" x2="191.0" y1="467.1" y2="471.6" stroke="#ccd6eb" stroke-width="1"/><text transform="translate(202.0,476.4) rotate(-45)" class="xl">4 AM</text><rect x="212.4" y="455.0" width="9.5" height="11.6" fill="#ffff00" stroke="#333" stroke-width="0.8"/><line x1="208.4" x2="208.4" y1="467.1" y2="471.6" stroke="#ccd6eb" stroke-width="1"/><text transform="translate(219.5,476.4) rotate(-45)" class="xl">5 AM</text><rect x="229.9" y="457.9" width="9.5" height="8.7" fill="#00e400" stroke="#333" stroke-width="0.8"/><line x1="225.9" x2="225.9" y1="467.1" y2="471.6" stroke="#ccd6eb" stroke-width="1"/><text transform="translate(236.9,476.4) rotate(-45)" class="xl">6 AM</text><rect x="247.4" y="462.0" width="9.5" height="4.6" fill="#00e400" stroke="#333" stroke-width="0.8"/><line x1="243.4" x2="243.4" y1="467.1" y2="471.6" stroke="#ccd6eb" stroke-width="1"/><text transform="translate(254.4,476.4) rotate(-45)" class="xl">7 AM</text><rect x="264.8" y="462.6" width="9.5" height="4.0" fill="#00e400" stroke="#333" stroke-width="0.8"/><line x1="260.9" x2="260.9" y1="467.1" y2="471.6" stroke="#ccd6eb" stroke-width="1"/><text transform="translate(271.9,476.4) rotate(-45)" class="xl">8 AM</text><rect x="282.3" y="461.1" width="9.5" height="5.5" fill="#00e400" stroke="#333" stroke-width="0.8"/><line x1="278.3" x2="278.3" y1="467.1" y2="471.6" stroke="#ccd6eb" stroke-width="1"/><text transform="translate(289.4,476.4) rotate(-45)" class="xl">9 AM</text><rect x="299.8" y="460.7" width="9.5" height="5.9" fill="#00e400" stroke="#333" stroke-width="0.8"/><line x1="295.8" x2="295.8" y1="467.1" y2="471.6" stroke="#ccd6eb" stroke-width="1"/><text transform="translate(306.8,476.4) rotate(-45)" class="xl">10 AM</text><rect x="317.2" y="459.8" width="9.5" height="6.8" fill="#00e400" stroke="#333" stroke-width="0.8"/><line x1="313.3" x2="313.3" y1="467.1" y2="471.6" stroke="#ccd6eb" stroke-width="1"/><text transform="translate(324.3,476.4) rotate(-45)" class="xl">11 AM</text><rect x="334.7" y="461.1" width="9.5" height="5.5" fill="#00e400" stroke="#333" stroke-width="0.8"/><line x1="330.7" x2="330.7" y1="467.1" y2="471.6" stroke="#ccd6eb" stroke-width="1"/><text transform="translate(341.8,476.4) rotate(-45)" class="xl">12 PM</text><rect x="352.2" y="464.7" width="9.5" height="1.9" fill="#00e400" stroke="#333" stroke-width="0.8"/><line x1="348.2" x2="348.2" y1="467.1" y2="471.6" stroke="#ccd6eb" stroke-width="1"/><text transform="translate(359.2,476.4) rotate(-45)" class="xl">1 PM</text><rect x="369.7" y="465.8" width="9.5" height="0.8" fill="#00e400" stroke="#333" stroke-width="0.8"/><line x1="365.7" x2="365.7" y1="467.1" y2="471.6" stroke="#ccd6eb" stroke-width="1"/><text transform="translate(376.7,476.4) rotate(-45)" class="xl">2 PM</text><rect x="387.1" y="464.7" width="9.5" height="1.9" fill="#00e400" stroke="#333" stroke-width="0.8"/><line x1="383.1" x2="383.1" y1="467.1" y2="471.6" stroke="#ccd6eb" stroke-width="1"/><text transform="translate(394.2,476.4) rotate(-45)" class="xl">3 PM</text><rect x="404.6" y="463.4" width="9.5" height="3.2" fill="#00e400" stroke="#333" stroke-width="0.8"/><line x1="400.6" x2="400.6" y1="467.1" y2="471.6" stroke="#ccd6eb" stroke-width="1"/><text transform="translate(411.7,476.4) rotate(-45)" class="xl">4 PM</text><rect x="422.1" y="462.4" width="9.5" height="4.2" fill="#00e400" stroke="#333" stroke-width="0.8"/><line x1="418.1" x2="418.1" y1="467.1" y2="471.6" stroke="#ccd6eb" stroke-width="1"/><text transform="translate(429.1,476.4) rotate(-45)" class="xl">5 PM</text><rect x="439.5" y="461.7" width="9.5" height="4.9" fill="#00e400" stroke="#333" stroke-width="0.8"/><line x1="435.6" x2="435.6" y1="467.1" y2="471.6" stroke="#ccd6eb" stroke-width="1"/><text transform="translate(446.6,476.4) rotate(-45)" class="xl">6 PM</text><rect x="457.0" y="460.3" width="9.5" height="6.3" fill="#00e400" stroke="#333" stroke-width="0.8"/><line x1="453.0" x2="453.0" y1="467.1" y2="471.6" stroke="#ccd6eb" stroke-width="1"/><text transform="translate(464.1,476.4) rotate(-45)" class="xl">7 PM</text><line x1="470.5" x2="470.5" y1="467.1" y2="471.6" stroke="#ccd6eb" stroke-width="1"/>
</svg>
<div class="a" style="left:485px;top:324.3px;width:147.5px;height:170.5px;border:1px solid #4a73a0;background:#eeeeee;box-sizing:border-box"></div>
<div class="a" style="left:486px;top:325.3px;width:145.5px;height:42.7px;background:#0b4a8a"></div>
<div class="a" style="left:486px;top:368px;width:145.5px;height:65.7px;background:#00e400"></div>
<div class="a" style="left:437px;top:3.5px;width:195px;height:20.3px;background:#0b4a8a"></div>
<div class="a" style="left:437px;top:23.8px;width:195px;height:21.6px;background:#fff;border:1px solid #d8d8d8;border-top:none;border-radius:0 0 3px 3px;box-sizing:border-box"></div>
<div class="a" style="left:437px;top:58.6px;width:195px;height:20.4px;background:#0b4a8a"></div>
<div class="a" style="left:437px;top:79px;width:195px;height:21.5px;background:#fff;border:1px solid #d8d8d8;border-top:none;border-radius:0 0 3px 3px;box-sizing:border-box"></div>
<div class="tx" style="left:609.3px;top:29px;font-size:11px;line-height:11px;color:#999">×</div>
<div class="a" style="left:619.5px;top:33px;width:0;height:0;border-left:3px solid transparent;border-right:3px solid transparent;border-top:3px solid #888"></div>
<div class="tx" style="left:609.3px;top:84px;font-size:11px;line-height:11px;color:#999">×</div>
<div class="a" style="left:619.5px;top:88px;width:0;height:0;border-left:3px solid transparent;border-right:3px solid transparent;border-top:3px solid #888"></div>
<div class="a" style="left:436.6px;top:113.2px;width:195.6px;height:42px;background:#fff;border:1px solid #d6d6d6;box-sizing:border-box"></div>
<svg class="a" style="left:605px;top:128.7px" width="21.4" height="20" viewBox="0 0 21.4 20"><rect width="21.4" height="20" fill="#f0b43c"/><circle cx="5.2" cy="15" r="2" fill="#fff"/><path d="M3.2 8.8 A8.2 8.2 0 0 1 11.4 17" stroke="#fff" stroke-width="2.2" fill="none"/><path d="M3.2 3.8 A13.2 13.2 0 0 1 16.4 17" stroke="#fff" stroke-width="2.2" fill="none"/></svg>
<div class="tx" style="left:45.5px;top:10.8px;font-size:11.65px;line-height:11.65px;font-weight:normal;color:#fff;">AirNow Department of State</div><div class="tx" style="left:439.9px;top:9.4px;font-size:8.4px;line-height:8.4px;font-weight:bold;color:#fff;letter-spacing:-0.35px">Select a City</div><div class="tx" style="left:442.5px;top:32.2px;font-size:8.28px;line-height:8.28px;font-weight:normal;color:#444;">Bishkek</div><div class="tx" style="left:439.9px;top:65.0px;font-size:8.4px;line-height:8.4px;font-weight:bold;color:#fff;letter-spacing:-0.3px">Select a Parameter</div><div class="tx" style="left:442.5px;top:86.9px;font-size:8.2px;line-height:8.2px;font-weight:normal;color:#444;">PM2.5</div><div class="tx" style="left:442.5px;top:121.0px;font-size:8.16px;line-height:8.16px;font-weight:bold;color:#333;">Bishkek</div><div class="tx" style="left:435.9px;top:165.0px;font-size:6.4px;line-height:6.4px;font-weight:normal;color:#777;">Note: Values above 500 are considered Beyond the AQI. Follow</div><div class="tx" style="left:435.9px;top:177.2px;font-size:6.4px;line-height:6.4px;font-weight:normal;color:#777;">recommendations for the Hazardous category. Additional information</div><div class="tx" style="left:435.9px;top:188.8px;font-size:6.4px;line-height:6.4px;font-weight:normal;color:#777;">on reducing exposure to extremely high levels of particle pollution is</div><div class="tx" style="left:435.9px;top:199.9px;font-size:6.4px;line-height:6.4px;font-weight:normal;color:#777;">available <b style="color:#223;text-decoration:underline">here</b>.</div><div class="tx" style="left:-111.2px;width:300px;text-align:center;top:282.5px;font-size:8.4px;line-height:8.4px;font-weight:normal;color:#333;">AQI</div><div class="tx" style="left:-29.7px;width:300px;text-align:center;top:283.9px;font-size:8.19px;line-height:8.19px;font-weight:normal;color:#888;">Concentration</div><div class="tx" style="left:60.7px;width:300px;text-align:center;top:283.9px;font-size:8.27px;line-height:8.27px;font-weight:normal;color:#888;">Historical</div><div class="tx" style="left:8.0px;top:303.6px;font-size:8.16px;line-height:8.16px;font-weight:normal;color:#222;">Learn more about how the Air Quality Index [AQI] is calculated from the EPA <u style="color:#1a3a6a">here</u>.</div><div class="tx" style="left:92.0px;width:300px;text-align:center;top:329.0px;font-size:11px;line-height:11px;font-weight:normal;color:#333;">Bishkek – PM2.5</div><div class="tx" style="left:408.7px;width:300px;text-align:center;top:330.6px;font-size:8.67px;line-height:8.67px;font-weight:bold;color:#fff;">Current Conditions</div><div class="tx" style="left:408.9px;width:300px;text-align:center;top:343.6px;font-size:6.98px;line-height:6.98px;font-weight:bold;color:#fff;">observed at</div><div class="tx" style="left:408.9px;width:300px;text-align:center;top:354.7px;font-size:8.72px;line-height:8.72px;font-weight:bold;color:#fff;">Nov 9, 2020 7:00 PM (LT)</div><div class="tx" style="left:408.9px;width:300px;text-align:center;top:379.5px;font-size:11.37px;line-height:11.37px;font-weight:bold;color:#000;">29 AQI</div><div class="tx" style="left:408.5px;width:300px;text-align:center;top:396.2px;font-size:11.22px;line-height:11.22px;font-weight:bold;color:#000;">Good</div><div class="tx" style="left:408.7px;width:300px;text-align:center;top:412.3px;font-size:11.35px;line-height:11.35px;font-weight:bold;color:#000;">PM2.5</div><div class="tx" style="left:408.9px;width:300px;text-align:center;top:440.8px;font-size:6.91px;line-height:6.91px;font-weight:bold;color:#222;">Health Message</div><div class="tx" style="left:489.0px;top:455.5px;font-size:6.97px;line-height:6.97px;font-weight:normal;color:#222;">The AQI value for your community is</div><div class="tx" style="left:489.0px;top:467.8px;font-size:6.97px;line-height:6.97px;font-weight:normal;color:#222;">between 0 and 50. Air quality is satisfactory</div><div class="tx" style="left:489.0px;top:479.8px;font-size:6.94px;line-height:6.94px;font-weight:normal;color:#222;">and poses little or no health risk.</div><div class="tx" style="left:485.0px;top:498.3px;font-size:6.4px;line-height:6.4px;font-weight:normal;color:#777;">Note: Values above 500 are considered Beyond the AQI. Follow</div><div class="tx" style="left:157.0px;width:300px;text-align:center;top:63.6px;font-size:8.07px;line-height:8.07px;font-weight:normal;color:#333;">Bishkek</div><div class="tx" style="left:157.0px;width:300px;text-align:center;top:72.0px;font-size:8.07px;line-height:8.07px;font-weight:normal;color:#333;">2020-11-09 7:00 PM</div><div class="tx" style="left:157.0px;width:300px;text-align:center;top:80.4px;font-size:8.07px;line-height:8.07px;font-weight:normal;color:#333;">(LT)</div><div class="tx" style="left:143.0px;width:300px;text-align:center;top:94.1px;font-size:7.95px;line-height:7.95px;font-weight:bold;color:#fff;">Pollutant</div><div class="tx" style="left:180.5px;width:300px;text-align:center;top:94.1px;font-size:7.95px;line-height:7.95px;font-weight:bold;color:#fff;">AQI</div><div class="tx" style="left:143.0px;width:300px;text-align:center;top:109.7px;font-size:8.06px;line-height:8.06px;font-weight:normal;color:#333;">PM2.5</div><div class="tx" style="left:180.5px;width:300px;text-align:center;top:109.7px;font-size:8.06px;line-height:8.06px;font-weight:normal;color:#111;">29</div>
</body></html>
